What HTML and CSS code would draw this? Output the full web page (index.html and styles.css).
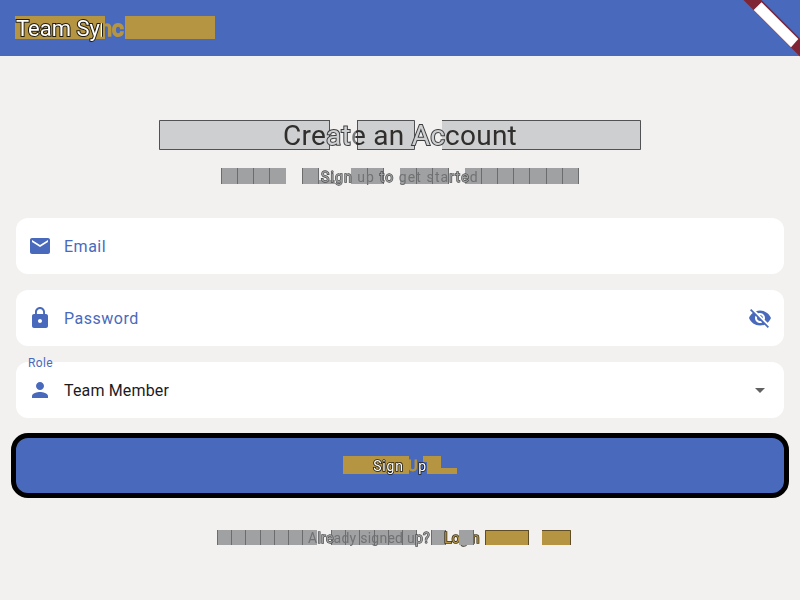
FILE: index.html
```html
<!DOCTYPE html>
<html lang="en">
<head>
<meta charset="utf-8">
<title>Team Sync</title>
<link rel="stylesheet" href="styles.css">
</head>
<body>
<header class="bar">
  <svg class="blocks bar-blocks" width="200" height="23"><path fill="#b59541" d="M0 0h90v23H0zM110 0h90v23H110z"/></svg>
  <h1 class="brand"><span class="lit">Team Sy</span><span class="split-n">n</span><span class="gold">c</span></h1>
  <svg class="banner" width="57" height="57"><path fill="#7f2536" d="M.5 0H18.500L57 38.500V56.500z"/><path fill="#fff" d="M18.500 2.200 10.700 10 48 47.300 55.300 39z"/></svg>
</header>
<main class="form">
  <div class="line heading-line">
    <svg class="blocks" width="482" height="30"><path fill="#cdcfd0" d="M0 0h171v30H0zM198 0h58v30H198zM283 0h199v30H283z"/><path fill="none" stroke="#505253" d="M170.500 0v30M171 .5H.5v29H171M198.500 0v30M198 .5h57.500v29H198M283 .5h198.500v29H283"/></svg>
    <h2 class="heading">Cre<span class="pale">at</span><span class="split-e">e</span> an <span class="pale">Ac</span>count</h2>
  </div>
  <div class="line sub-line">
    <svg class="blocks" width="358" height="16"><path fill="#a0a1a2" d="M0 0h65v16H0zM81 0h17v16H81zM98 12h16v4H98zM130 0h33v16h-33zM179 0h49v16h-49zM244 0h114v16H244z"/><path stroke="#6a6c6d" d="M.5 0v16M16.500 0v16M32.500 0v16M48.500 0v16M81.500 0v16M97.500 0v16M146.500 0v16M162.500 0v16M195.500 0v16M211.500 0v16M227.500 0v16M260.500 0v16M276.500 0v16M292.500 0v16M308.500 0v16M325.500 0v16M341.500 0v16M357.500 0v16"/></svg>
    <p class="sub"><span class="etched">Sign</span> up <span class="etched">to</span> get sta<span class="etched">rte</span>d</p>
  </div>
  <div class="field">
    <svg class="icon" viewBox="0 0 24 24"><path d="M20 4H4c-1.100 0-1.990.9-1.990 2L2 18c0 1.100.9 2 2 2h16c1.100 0 2-.9 2-2V6c0-1.100-.9-2-2-2zm0 4-8 5-8-5V6l8 5 8-5v2z"/></svg>
    <span class="label">Email</span>
  </div>
  <div class="field">
    <svg class="icon" viewBox="0 0 24 24"><path d="M18 8h-1V6c0-2.760-2.240-5-5-5S7 3.240 7 6v2H6c-1.100 0-2 .9-2 2v10c0 1.100.9 2 2 2h12c1.100 0 2-.9 2-2V10c0-1.100-.9-2-2-2zm-6 9c-1.100 0-2-.9-2-2s.9-2 2-2 2 .9 2 2-.9 2-2 2zm3.100-9H8.900V6c0-1.710 1.390-3.100 3.100-3.100s3.100 1.390 3.100 3.100v2z"/></svg>
    <span class="label">Password</span>
    <svg class="icon" viewBox="0 0 24 24"><path d="M12 7c2.760 0 5 2.240 5 5 0 .65-.13 1.260-.36 1.830l2.920 2.920c1.510-1.260 2.700-2.890 3.430-4.750-1.730-4.390-6-7.500-11-7.500-1.400 0-2.740.25-3.980.7l2.160 2.160C10.740 7.130 11.350 7 12 7zM2 4.270l2.280 2.280.46.46C3.080 8.300 1.780 10.020 1 12c1.730 4.390 6 7.500 11 7.500 1.550 0 3.030-.3 4.380-.84l.42.42L19.730 22 21 20.730 3.270 3 2 4.270zM7.530 9.800l1.550 1.550c-.05.21-.08.43-.08.65 0 1.660 1.340 3 3 3 .22 0 .44-.03.65-.08l1.550 1.550c-.67.33-1.410.53-2.200.53-2.760 0-5-2.240-5-5 0-.79.2-1.530.53-2.200zm4.310-.78 3.150 3.150.02-.16c0-1.660-1.340-3-3-3l-.17.01z"/></svg>
  </div>
  <div class="field">
    <span class="float">Role</span>
    <svg class="icon" viewBox="0 0 24 24"><path d="M12 12c2.210 0 4-1.790 4-4s-1.790-4-4-4-4 1.790-4 4 1.790 4 4 4zm0 2c-2.670 0-8 1.340-8 4v2h16v-2c0-2.660-5.330-4-8-4z"/></svg>
    <span class="label value">Team Member</span>
    <svg class="icon arrow" viewBox="0 0 24 24"><path d="M7 10l5 5 5-5z"/></svg>
  </div>
  <button class="submit">
    <svg class="blocks" width="114" height="18"><path fill="#b59541" d="M0 0h66v18H0zM80 0h18v12h16v6H84V6h-4z"/></svg>
    <span class="submit-text"><span class="lit">Sign</span> <span class="gold">U</span><span class="lit">p</span></span>
  </button>
  <div class="line foot-line">
    <svg class="blocks" width="354" height="15"><path fill="#a0a1a2" d="M0 0h100v15H0zM114 0h86v15h-86zM214 0h15v15h-15z"/><path fill="#b59541" d="M268 0h44v15h-44zM325 0h29v15h-29z"/><path stroke="#6a6c6d" d="M.5 0v15M14.500 0v15M28.500 0v15M43.500 0v15M57.500 0v15M71.500 0v15M85.500 0v15M114.500 0v15M128.500 0v15M142.500 0v15M157.500 0v15M171.500 0v15M185.500 0v15M199.500 0v15M214.500 0v15M228.500 0v15"/><path stroke="#5d4e28" fill="none" d="M268.500 15V.5H312M311.500 0v15M325 .5h28.500V15"/></svg>
    <p class="foot">A<span class="etched">lre</span>ady signed u<span class="etched">p?</span></p><a class="login">Login</a>
    <svg class="blocks over" width="354" height="15"><path fill="#a0a1a2" d="M242 0h15v15h-15z"/><path stroke="#6a6c6d" d="M256.500 0v15"/></svg>
  </div>
</main>
</body>
</html>
```

FILE: styles.css
```css
* { box-sizing: border-box; }
body {
  margin: 0;
  height: 600px;
  overflow: hidden;
  background: #f3f1f0;
  font-family: Roboto, sans-serif;
  color: #1c1b1f;
}
h1, h2, p { margin: 0; font-weight: 400; white-space: nowrap; position: relative; }
.brand, .heading, .sub, .foot, .login, .submit-text { will-change: transform; }
.bar {
  position: relative;
  height: 56px;
  padding: 2px 16px 0;
  display: flex;
  align-items: center;
  background: #496abc;
}
.brand { font-size: 22px; line-height: 28px; }
.blocks { position: absolute; left: 50%; top: 0; transform: translateX(-50%); }
.bar-blocks { left: 15px; top: 16px; transform: none; }
.banner { position: absolute; right: 0; top: 0; }
.lit {
  color: #fff;
  -webkit-text-stroke: 2px #1d1a12;
  paint-order: stroke fill;
}
.gold { color: #b59541; -webkit-text-stroke: 2px #b59541; }
.submit .gold { -webkit-text-stroke-width: 1px; }
.submit .lit { -webkit-text-stroke-width: 1.7px; }
.split-n {
  background: linear-gradient(90deg, #fff 0 2px, #1d1a12 2px 3px, #b59541 3px);
  -webkit-background-clip: text;
  background-clip: text;
  color: transparent;
  -webkit-text-stroke: 1.5px transparent;
}
.form { padding: 64px 16px 0; display: flex; flex-direction: column; }
.line { position: relative; display: flex; justify-content: center; align-items: center; }
.heading-line { height: 30px; }
.heading { padding-top: 2px; font-size: 28px; line-height: 30px; letter-spacing: .25px; color: #302f2d; }
.pale, .split-e {
  color: #cdcfd0;
  -webkit-text-stroke: 2px #3d3e3f;
  paint-order: stroke fill;
}
.split-e {
  background: linear-gradient(90deg, #77797a 0 5px, #302f2d 5px);
  -webkit-background-clip: text;
  background-clip: text;
  color: transparent;
  -webkit-text-stroke: 0;
}
.sub-line { height: 16px; margin: 18px 0 34px; }
.sub { padding-top: 2px; font-size: 14px; line-height: 18px; letter-spacing: 1.1px; color: #707273; }
.etched {
  color: #a0a1a2;
  -webkit-text-stroke: 1.3px #494b4c;
  paint-order: stroke fill;
}
.field {
  position: relative;
  height: 56px;
  margin-bottom: 16px;
  padding: 0 12px;
  display: flex;
  align-items: center;
  gap: 12px;
  border-radius: 12px;
  background: #fff;
}
.icon { width: 24px; height: 24px; fill: #496abc; flex: none; }
.icon.arrow { fill: #616161; }
.label { flex: 1; padding-top: 1px; font-size: 16px; letter-spacing: .5px; color: #496abc; }
.label.value { letter-spacing: .15px; color: #1c1b1f; }
.float { position: absolute; left: 12px; top: -7px; font-size: 12px; line-height: 16px; letter-spacing: .4px; color: #496abc; }
.submit {
  position: relative;
  height: 65px;
  margin: -1px -5px 0;
  border: 5px solid #000;
  border-radius: 17px;
  background: #496abc;
  font: 400 14px/20px Roboto, sans-serif;
  letter-spacing: .85px;
}
.submit .blocks { top: 18px; }
.submit-text { position: relative; }
.foot-line { height: 15px; margin-top: 32px; padding-right: 12px; gap: 14px; }
.foot-line .blocks { left: 201px; transform: none; }
.foot, .login { position: relative; font-size: 14px; line-height: 16px; letter-spacing: .25px; color: #707273; }
.login { color: #b59541; -webkit-text-stroke: 1.6px #3c321a; paint-order: stroke fill; }
```
